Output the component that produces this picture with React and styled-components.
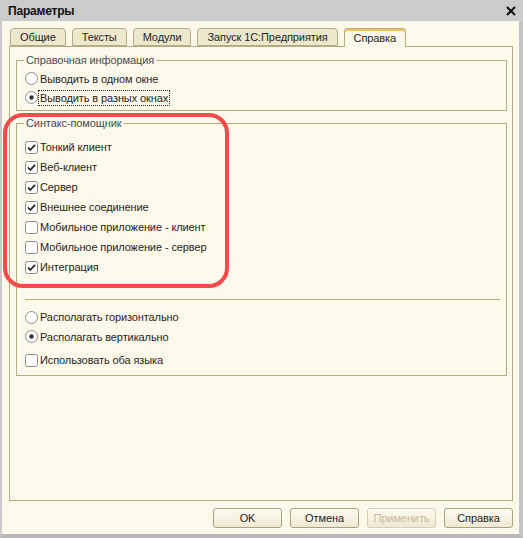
import React from 'react'
import styled, { createGlobalStyle } from 'styled-components'

const Global = createGlobalStyle`
  html, body {
    margin: 0;
    padding: 0;
    background: #fcf9ea;
  }
  body {
    font-family: "Liberation Sans", Arial, sans-serif;
    font-size: 11px;
    letter-spacing: -0.1px;
    color: #1e1e1e;
  }
`

const Window = styled.div`
  position: relative;
  width: 523px;
  height: 538px;
  box-sizing: border-box;
  display: flex;
  flex-direction: column;
  background: #fcf9ea;
  border-left: 2px solid #c9c9c9;
  border-right: 4px solid #c4c4c4;
  border-bottom: 4px solid #b9b9b9;
  box-shadow: inset -2px -2px 0 #fcf9ea;
`

const TitleBar = styled.div`
  height: 21px;
  flex: none;
  margin-left: -2px;
  margin-right: -4px;
  display: flex;
  align-items: center;
  justify-content: space-between;
  padding: 0 7px 0 8px;
  background: #cbcbcb;
  font-weight: bold;
  font-size: 12px;
  letter-spacing: -0.2px;
  color: #111;
`

const CloseIcon = () => (
  <svg width="10" height="10" viewBox="0 0 10 10">
    <path d="M1 1 L9 9 M9 1 L1 9" stroke="#111" strokeWidth="2" />
  </svg>
)

const Body = styled.div`
  flex: 1;
  display: flex;
  flex-direction: column;
  padding: 7px 6px 6px 7px;
  min-height: 0;
`

const TabBar = styled.div`
  display: flex;
  gap: 6px;
  padding-left: 1px;
  height: 18px;
  position: relative;
  z-index: 1;
`

const Tab = styled.div`
  box-sizing: border-box;
  height: ${p => (p.$active ? '19px' : '18px')};
  padding: 0 9px;
  display: flex;
  align-items: center;
  border: 1px solid #b5ab85;
  border-bottom: ${p => (p.$active ? 'none' : '1px solid #b5ab85')};
  border-radius: 4px 4px 0 0;
  background: ${p => (p.$active ? '#fcf9ea' : '#ede7cd')};
  box-shadow: ${p => (p.$active ? 'inset 0 2px 0 #f3c15e' : 'none')};
  color: #1e1e1e;
`

const Panel = styled.div`
  flex: 1;
  border: 1px solid #b5ab85;
  padding: 6px 5px 0 6px;
  display: flex;
  flex-direction: column;
  gap: 5px;
`

const Group = styled.fieldset`
  margin: 0;
  border: 1px solid #b5ab85;
  padding: 2px 6px ${p => p.$bottom || 3}px 8px;
  min-width: 0;
`

const Legend = styled.legend`
  padding: 0 2px;
  margin-left: -1px;
  line-height: 14px;
  color: #4a4a4a;
`

const Row = styled.div`
  height: ${p => p.$h || 20}px;
  display: flex;
  align-items: center;
  gap: 0;
  margin-top: ${p => p.$mt || 0}px;
`

const Label = styled.span`
  line-height: 14px;
  padding: 0 1px;
  border: 1px dotted ${p => (p.$focus ? '#222' : 'transparent')};
`

const Separator = styled.div`
  height: 1px;
  background: #b5ab85;
  margin: 22px 0 7px;
`

const ButtonRow = styled.div`
  display: flex;
  justify-content: flex-end;
  gap: 8px;
  padding-top: 7px;
`

const Button = styled.div`
  box-sizing: border-box;
  width: 69px;
  height: 20px;
  display: flex;
  align-items: center;
  justify-content: center;
  border: 1px solid ${p => (p.$disabled ? '#d8cfb2' : '#aaa27f')};
  border-radius: 3px;
  background: linear-gradient(#fdfbf1, #efe9d2);
  color: ${p => (p.$disabled ? '#c9b99b' : '#1e1e1e')};
`

const Highlight = styled.div`
  position: absolute;
  left: 1px;
  top: 113px;
  width: 226px;
  height: 175px;
  box-sizing: border-box;
  border: 4px solid #f44a4a;
  border-radius: 20px;
  pointer-events: none;
`

const CheckBox = ({ checked }) => (
  <svg width="13" height="13" viewBox="0 0 13 13">
    <rect x="0.5" y="0.5" width="12" height="12" rx="2" fill="#fff" stroke="#8d8d8d" />
    {checked && (
      <path d="M3 6.5 L5.3 9 L10 3.8" fill="none" stroke="#222" strokeWidth="1.8" />
    )}
  </svg>
)

const Radio = ({ checked }) => (
  <svg width="13" height="13" viewBox="0 0 13 13">
    <circle cx="6.5" cy="6.5" r="6" fill="#fff" stroke="#8d8d8d" />
    {checked && <circle cx="6.5" cy="6.5" r="2.2" fill="#333" />}
  </svg>
)

const syntaxOptions = [
  ['Тонкий клиент', true],
  ['Веб-клиент', true],
  ['Сервер', true],
  ['Внешнее соединение', true],
  ['Мобильное приложение - клиент', false],
  ['Мобильное приложение - сервер', false],
  ['Интеграция', true],
]

const tabs = ['Общие', 'Тексты', 'Модули', 'Запуск 1С:Предприятия', 'Справка']

export default function App() {
  return (
    <>
      <Global />
      <Window>
        <TitleBar>
          <span>Параметры</span>
          <CloseIcon />
        </TitleBar>
        <Body>
          <TabBar>
            {tabs.map((t, i) => (
              <Tab key={t} $active={i === 4}>{t}</Tab>
            ))}
          </TabBar>
          <Panel>
            <Group>
              <Legend>Справочная информация</Legend>
              <Row $h={19}>
                <Radio />
                <Label>Выводить в одном окне</Label>
              </Row>
              <Row $h={19}>
                <Radio checked />
                <Label $focus>Выводить в разных окнах</Label>
              </Row>
            </Group>
            <Group $bottom={5}>
              <Legend>Синтакс-помощник</Legend>
              <div style={{ height: 5 }} />
              {syntaxOptions.map(([text, on]) => (
                <Row key={text}>
                  <CheckBox checked={on} />
                  <Label>{text}</Label>
                </Row>
              ))}
              <Separator />
              <Row>
                <Radio />
                <Label>Располагать горизонтально</Label>
              </Row>
              <Row $h={19}>
                <Radio checked />
                <Label>Располагать вертикально</Label>
              </Row>
              <Row $mt={4}>
                <CheckBox />
                <Label>Использовать оба языка</Label>
              </Row>
            </Group>
          </Panel>
          <ButtonRow>
            <Button>OK</Button>
            <Button>Отмена</Button>
            <Button $disabled>Применить</Button>
            <Button>Справка</Button>
          </ButtonRow>
        </Body>
        <Highlight />
      </Window>
    </>
  )
}
